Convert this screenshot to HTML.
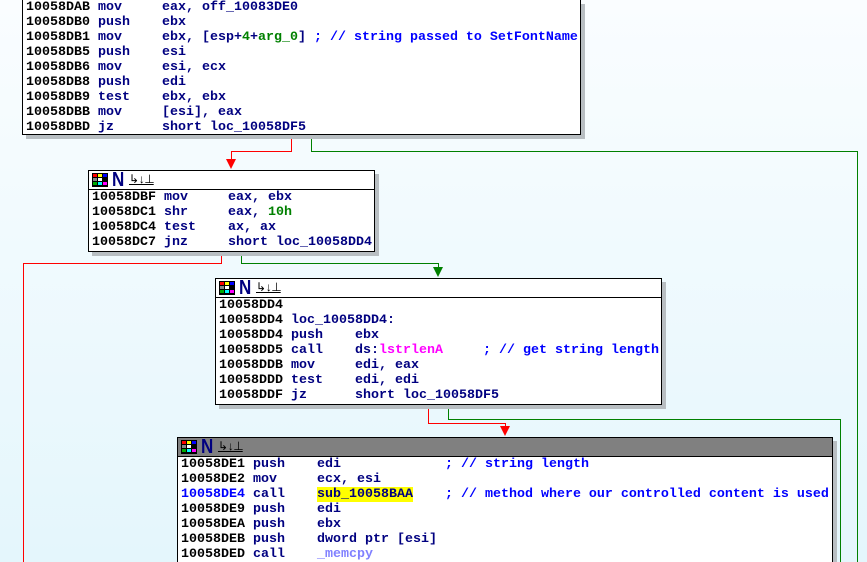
<!DOCTYPE html>
<html><head><meta charset="utf-8"><style>
html,body{margin:0;padding:0;width:867px;height:562px;overflow:hidden;}
body{position:relative;background:linear-gradient(#fafdff,#e4f6fc);font-family:"Liberation Mono",monospace;font-weight:bold;font-size:13.33px;}
.b{position:absolute;background:#fff;border:1px solid #000;box-shadow:4px 4px 0 #b8bec2;}
.h{height:18px;border-bottom:1px solid #000;position:relative;}
.h.d{background:#808080;}
.l{height:15px;line-height:15px;white-space:pre;padding-left:3px;color:#000080;}
.a{color:#000;}
.c{color:#0000ff;}
.g{color:#008000;}
.m{color:#ff00ff;}
.p{color:#8080ff;}
.y{background:#ffff00;}
.ln{position:absolute;}
.r{background:#f00;}
.gr{background:#008000;}
.ic{position:absolute;left:3px;top:2px;background:#000;display:grid;grid-template-columns:repeat(3,4px);grid-template-rows:repeat(3,3px);gap:1px;padding:1px;box-sizing:border-box;width:16px;height:14px;}
.ic i{display:block;}
.N{position:absolute;left:23px;top:0px;font-size:20px;color:#000080;font-family:"Liberation Sans",sans-serif;font-weight:bold;line-height:18px;transform:scaleX(0.85);transform-origin:left;}
.s{position:absolute;left:40px;top:2px;font-size:12px;color:#000;line-height:14px;letter-spacing:-1px;font-weight:normal;text-decoration:underline;}
.ar{position:absolute;width:0;height:0;border-left:5px solid transparent;border-right:5px solid transparent;}
</style></head><body>

<div class="ln r" style="left:291px;top:135px;width:1px;height:17px"></div>
<div class="ln r" style="left:231px;top:151px;width:61px;height:1px"></div>
<div class="ln r" style="left:231px;top:151px;width:1px;height:12px"></div>
<div class="ar" style="left:226px;top:159px;border-top:10px solid #f00"></div>
<div class="ln gr" style="left:311px;top:135px;width:1px;height:17px"></div>
<div class="ln gr" style="left:311px;top:151px;width:547px;height:1px"></div>
<div class="ln gr" style="left:857px;top:151px;width:1px;height:411px"></div>

<div class="ln r" style="left:221px;top:251px;width:1px;height:13px"></div>
<div class="ln r" style="left:23px;top:263px;width:199px;height:1px"></div>
<div class="ln r" style="left:23px;top:263px;width:1px;height:299px"></div>
<div class="ln gr" style="left:241px;top:251px;width:1px;height:13px"></div>
<div class="ln gr" style="left:241px;top:263px;width:198px;height:1px"></div>
<div class="ln gr" style="left:438px;top:263px;width:1px;height:6px"></div>
<div class="ar" style="left:433px;top:267px;border-top:10px solid #008000"></div>

<div class="ln r" style="left:428px;top:405px;width:1px;height:19px"></div>
<div class="ln r" style="left:428px;top:423px;width:78px;height:1px"></div>
<div class="ln r" style="left:505px;top:423px;width:1px;height:5px"></div>
<div class="ar" style="left:500px;top:426px;border-top:10px solid #f00"></div>
<div class="ln gr" style="left:448px;top:405px;width:1px;height:15px"></div>
<div class="ln gr" style="left:448px;top:419px;width:393px;height:1px"></div>
<div class="ln gr" style="left:840px;top:419px;width:1px;height:143px"></div>

<div class="b" style="left:22px;top:0px;width:557px;height:134px;border-top:none">
<div class="l"><span class="a">10058DAB</span> mov     eax, off_10083DE0</div>
<div class="l"><span class="a">10058DB0</span> push    ebx</div>
<div class="l"><span class="a">10058DB1</span> mov     ebx, [esp+<span class="g">4</span>+<span class="g">arg_0</span>] <span class="c">; // string passed to SetFontName</span></div>
<div class="l"><span class="a">10058DB5</span> push    esi</div>
<div class="l"><span class="a">10058DB6</span> mov     esi, ecx</div>
<div class="l"><span class="a">10058DB8</span> push    edi</div>
<div class="l"><span class="a">10058DB9</span> test    ebx, ebx</div>
<div class="l"><span class="a">10058DBB</span> mov     [esi], eax</div>
<div class="l"><span class="a">10058DBD</span> jz      short loc_10058DF5</div>
</div>

<div class="b" style="left:88px;top:170px;width:285px;height:80px">
<div class="h"><div class="ic"><i style="background:#f00"></i><i style="background:#ff0"></i><i style="background:#00f"></i><i style="background:#888"></i><i style="background:#fff"></i><i style="background:#000"></i><i style="background:#0a0"></i><i style="background:#0ff"></i><i style="background:#f0f"></i></div><span class="N">N</span><span class="s">↳↓⊥</span></div>
<div class="l"><span class="a">10058DBF</span> mov     eax, ebx</div>
<div class="l"><span class="a">10058DC1</span> shr     eax, <span class="g">10h</span></div>
<div class="l"><span class="a">10058DC4</span> test    ax, ax</div>
<div class="l"><span class="a">10058DC7</span> jnz     short loc_10058DD4</div>
</div>

<div class="b" style="left:215px;top:278px;width:445px;height:125px">
<div class="h"><div class="ic"><i style="background:#f00"></i><i style="background:#ff0"></i><i style="background:#00f"></i><i style="background:#888"></i><i style="background:#fff"></i><i style="background:#000"></i><i style="background:#0a0"></i><i style="background:#0ff"></i><i style="background:#f0f"></i></div><span class="N">N</span><span class="s">↳↓⊥</span></div>
<div class="l"><span class="a">10058DD4</span></div>
<div class="l"><span class="a">10058DD4</span> loc_10058DD4:</div>
<div class="l"><span class="a">10058DD4</span> push    ebx</div>
<div class="l"><span class="a">10058DD5</span> call    ds:<span class="m">lstrlenA</span>     <span class="c">; // get string length</span></div>
<div class="l"><span class="a">10058DDB</span> mov     edi, eax</div>
<div class="l"><span class="a">10058DDD</span> test    edi, edi</div>
<div class="l"><span class="a">10058DDF</span> jz      short loc_10058DF5</div>
</div>

<div class="b" style="left:177px;top:437px;width:654px;height:140px">
<div class="h d"><div class="ic"><i style="background:#f00"></i><i style="background:#ff0"></i><i style="background:#00f"></i><i style="background:#888"></i><i style="background:#fff"></i><i style="background:#000"></i><i style="background:#0a0"></i><i style="background:#0ff"></i><i style="background:#f0f"></i></div><span class="N">N</span><span class="s">↳↓⊥</span></div>
<div class="l"><span class="a">10058DE1</span> push    edi             <span class="c">; // string length</span></div>
<div class="l"><span class="a">10058DE2</span> mov     ecx, esi</div>
<div class="l"><span class="c">10058DE4</span> call    <span class="y">sub_10058BAA</span>    <span class="c">; // method where our controlled content is used</span></div>
<div class="l"><span class="a">10058DE9</span> push    edi</div>
<div class="l"><span class="a">10058DEA</span> push    ebx</div>
<div class="l"><span class="a">10058DEB</span> push    dword ptr [esi]</div>
<div class="l"><span class="a">10058DED</span> call    <span class="p">_memcpy</span></div>
</div>

</body></html>
